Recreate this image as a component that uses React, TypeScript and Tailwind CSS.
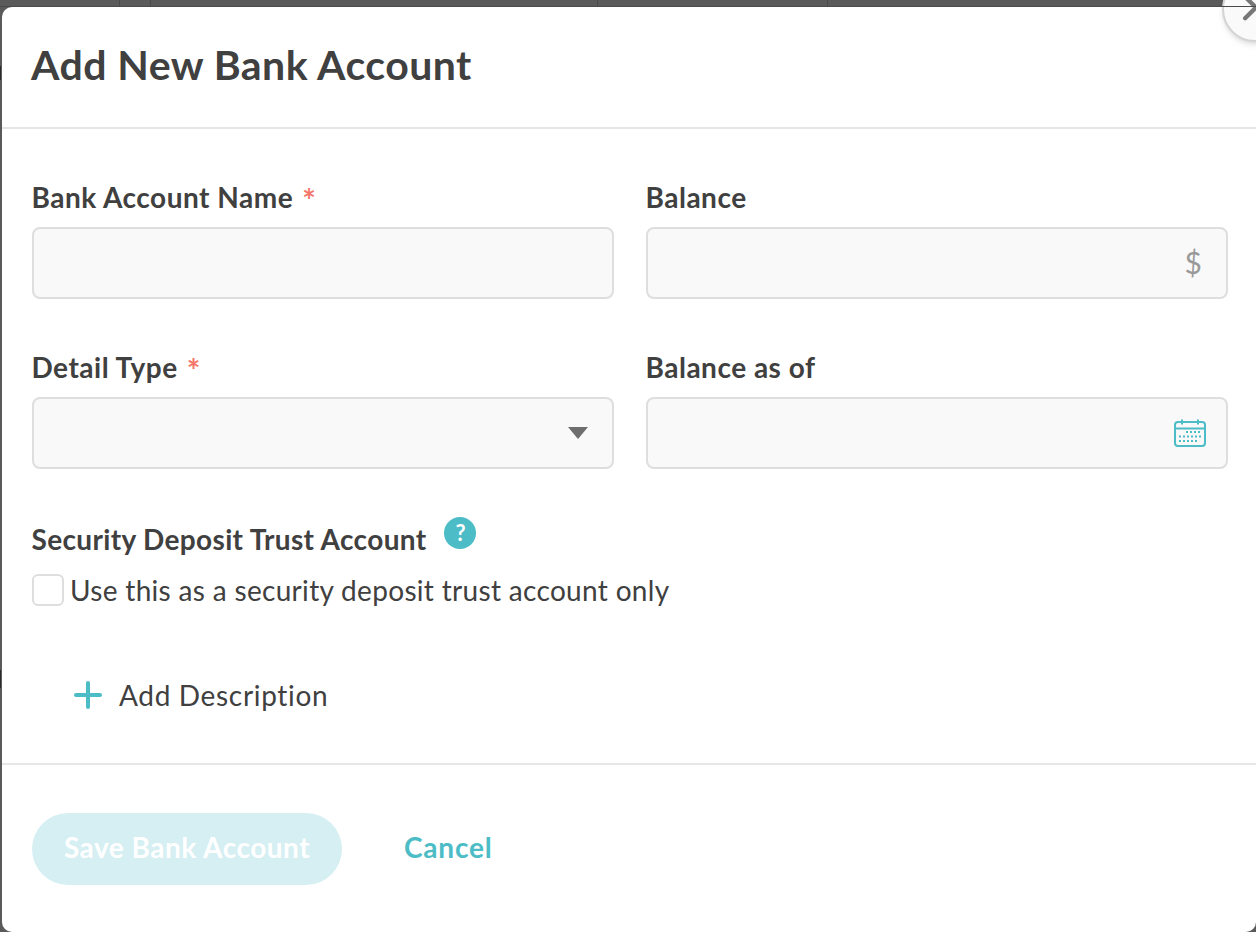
import { ChevronRight } from "lucide-react";

const font = "font-['Lato','Liberation_Sans',sans-serif]";

function Label({ text, required, tight }: { text: string; required?: boolean; tight?: boolean }) {
  return (
    <div className={`-ml-[0.5px] h-[30px] text-[28px] leading-[30px] font-bold text-[#404040] whitespace-nowrap ${tight ? "tracking-[0.35px]" : "tracking-[0.5px]"}`}>
      {text}
      {required && <span className="relative top-[4px] inline-block h-[30px] align-top ml-[9px] text-[#f4776a] text-[32px] leading-[30px]">*</span>}
    </div>
  );
}

function Field({ children }: { children?: React.ReactNode }) {
  return (
    <div className="mt-[15px] h-[72px] rounded-lg border-2 border-[#dedede] bg-[#f9f9f9] flex items-center justify-end pr-6">
      {children}
    </div>
  );
}

function CalendarIcon() {
  return (
    <svg className="-mr-[5px]" width="34" height="30" viewBox="0 0 34 30" fill="none" stroke="#4cbcc6" strokeWidth="2">
      <rect x="2" y="4" width="30" height="24" rx="3" />
      <path d="M2 10.5h30M9 1.5v5M25 1.5v5" />
      <g fill="#4cbcc6" stroke="none">
        {[14, 18, 22, 26].map((x) => (
          <rect key={x} x={x - 1} y="13" width="2" height="2" />
        ))}
        {[6, 10, 14, 18, 22, 26].map((x) => (
          <rect key={x} x={x} y="17.5" width="2" height="2" />
        ))}
        {[6, 10, 14, 18, 22].map((x) => (
          <rect key={x} x={x} y="22" width="2" height="2" />
        ))}
      </g>
    </svg>
  );
}

export default function App() {
  return (
    <div className={`relative w-[1256px] h-[932px] overflow-hidden bg-[#5a5a5a] pl-[2px] pt-[7px] ${font}`}>
      <div className="h-[925px] rounded-[10px] bg-white">
        <div className="h-[122px] border-b-2 border-[#e6e6e6] pl-[29px] pt-[31px]">
          <h1 className="text-[41px] leading-[54px] font-bold text-[#404040] tracking-[0.45px]">Add New Bank Account</h1>
        </div>

        <div className="pl-[30px] pr-[28px] pt-[53px]">
          <div className="grid grid-cols-[582px_582px] gap-x-8 gap-y-[53px]">
            <div>
              <Label text="Bank Account Name" required />
              <Field />
            </div>
            <div>
              <Label text="Balance" />
              <Field>
                <span className="-mt-[2px] text-[30px] text-[#999999]">$</span>
              </Field>
            </div>
            <div>
              <Label text="Detail Type" required />
              <Field>
                <span className="w-0 h-0 border-x-[10px] border-x-transparent border-t-[12px] border-t-[#6e6e6e]" />
              </Field>
            </div>
            <div>
              <Label text="Balance as of" />
              <Field>
                <CalendarIcon />
              </Field>
            </div>
          </div>

          <div className="mt-[55px] flex items-start">
            <Label text="Security Deposit Trust Account" tight />
            <span className="ml-[18px] -mt-[7px] w-8 h-8 rounded-full bg-[#4cbcc6] text-white text-[22px] leading-8 font-bold text-center">?</span>
          </div>
          <label className="mt-[20px] flex items-center gap-[6px]">
            <span className="w-8 h-8 rounded-md border-2 border-[#dedede] bg-white" />
            <span className="text-[28px] leading-8 text-[#404040] tracking-[0.32px]">Use this as a security deposit trust account only</span>
          </label>

          <div className="mt-[73px] ml-[41px] flex items-center gap-[16px] h-8">
            <svg width="30" height="30" viewBox="0 0 30 30">
              <path d="M15 3v24M3 15h24" stroke="#4cbcc6" strokeWidth="4" strokeLinecap="round" />
            </svg>
            <span className="text-[28px] text-[#404040] tracking-[0.67px]">Add Description</span>
          </div>
        </div>

        <div className="mt-[52px] border-t-2 border-[#e6e6e6] pl-[30px] pt-[48px] flex items-center">
          <button className="w-[310px] h-[72px] pb-[4px] rounded-full bg-[#d5eff2] text-white text-[28px] font-bold tracking-[0.5px]">Save Bank Account</button>
          <button className="ml-[62px] pb-[4px] text-[28px] font-bold text-[#4cbcc6] tracking-[0.8px]">Cancel</button>
        </div>
      </div>

      {/* close button sits over the modal corner */}
      <div className="absolute left-[1222px] -top-[24px] w-[66px] h-[66px] rounded-full bg-[#fafafa] border-2 border-[#d4d4d4] shadow-md">
        <ChevronRight className="absolute left-[5px] top-[8px] text-[#777777]" size={43} strokeWidth={2.4} />
      </div>

      {/* bits of the page behind the dialog */}
      <div className="absolute inset-x-0 top-0 h-[7px] border-b border-[#4a4a4a]">
        <i className="absolute left-[119px] w-px h-full bg-[#4a4a4a]" />
        <i className="absolute left-[150px] w-px h-full bg-[#4a4a4a]" />
        <i className="absolute left-[597px] w-px h-full bg-[#4a4a4a]" />
        <i className="absolute left-[827px] w-px h-full bg-[#4a4a4a]" />
      </div>
      <i className="absolute left-0 top-[66px] w-px h-[14px] bg-[#2a2a2a]" />
      <i className="absolute left-0 top-[670px] w-px h-[18px] bg-[#2a2a2a]" />
    </div>
  );
}
